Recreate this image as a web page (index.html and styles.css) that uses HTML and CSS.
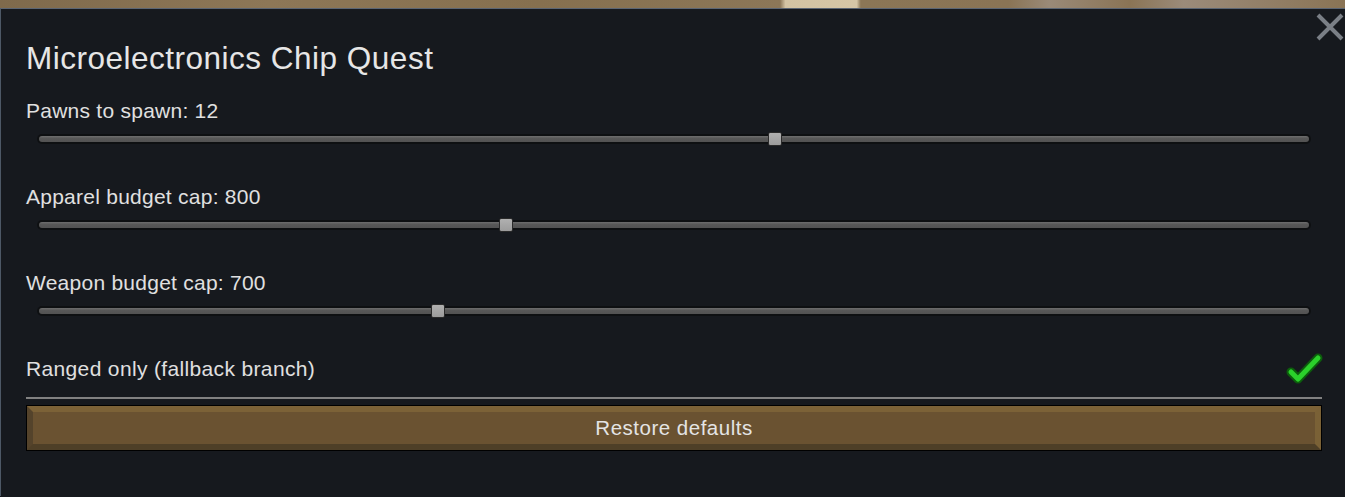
FILE: index.html
```html
<!DOCTYPE html>
<html>
<head>
<meta charset="utf-8">
<link rel="stylesheet" href="styles.css">
</head>
<body>
<div class="world"></div>
<div class="panel">
  <button class="close" aria-label="Close">
    <svg width="28" height="28" viewBox="0 0 28 28"><path d="M2 2 L26 26 M26 2 L2 26" stroke="#7a7f86" stroke-width="4" fill="none"/></svg>
  </button>
  <h1 class="title">Microelectronics Chip Quest</h1>
  <div class="settings">
    <div class="setting">
      <div class="label">Pawns to spawn: 12</div>
      <div class="slider"><div class="track"><div class="fill"></div><div class="thumb" style="left: calc(57.9% - 7px)"></div></div></div>
    </div>
    <div class="setting">
      <div class="label">Apparel budget cap: 800</div>
      <div class="slider"><div class="track"><div class="fill"></div><div class="thumb" style="left: calc(36.8% - 7px)"></div></div></div>
    </div>
    <div class="setting">
      <div class="label">Weapon budget cap: 700</div>
      <div class="slider"><div class="track"><div class="fill"></div><div class="thumb" style="left: calc(31.5% - 7px)"></div></div></div>
    </div>
  </div>
  <div class="check-row">
    <span class="label">Ranged only (fallback branch)</span>
    <svg class="check" width="38" height="34" viewBox="0 0 38 34">
      <polyline points="5,20 12,27 32,6" fill="none" stroke="#0c5e0c" stroke-width="9" stroke-linecap="round" stroke-linejoin="round"/>
      <polyline points="5,20 12,27 32,6" fill="none" stroke="#2bd12b" stroke-width="5" stroke-linecap="round" stroke-linejoin="round"/>
    </svg>
  </div>
  <div class="separator"></div>
  <button class="restore"><span class="bevel">Restore defaults</span></button>
</div>
</body>
</html>
```
FILE: styles.css
```css
html, body {
  margin: 0;
  padding: 0;
  background: #16191e;
  font-family: "Liberation Sans", Arial, sans-serif;
}
.world {
  height: 8px;
  background: linear-gradient(90deg, #7f6a4c 0%, #8d7757 20%, #86704f 40%, #8c7758 58%, #d3c3a3 58.4%, #d6c6a6 63.7%, #8b7656 64%, #8a7455 75%, #9a8a78 78%, #8a7455 84%, #9b8b7a 88%, #8a7455 100%);
}
.panel {
  position: relative;
  height: 488px;
  box-sizing: border-box;
  border-top: 1px solid #5b6573;
  border-left: 1px solid #4d5866;
  background: #16191e;
  padding: 32px 23px 0 25px;
  color: #e2e2e2;
}
.close {
  position: absolute;
  top: 4px;
  right: 1px;
  padding: 0;
  border: 0;
  background: none;
  width: 28px;
  height: 28px;
}
.close svg { display: block; }
.title {
  margin: 0;
  font-size: 31.5px;
  font-weight: normal;
  letter-spacing: 0.5px;
  line-height: 34px;
  color: #e6e6e6;
}
.settings {
  display: flex;
  flex-direction: column;
  gap: 39px;
  margin-top: 24px;
}
.setting {
  display: flex;
  flex-direction: column;
  gap: 9px;
}
.label {
  font-size: 21px;
  line-height: 24px;
  letter-spacing: 0.25px;
  color: #e0e0e0;
}
.check-row .label {
  letter-spacing: 0.35px;
}
.slider {
  height: 14px;
  padding: 0 11px;
  display: flex;
  align-items: center;
}
.track {
  position: relative;
  flex: 1;
  height: 10px;
  border-radius: 5px;
  background: #0e1012;
  box-sizing: border-box;
  padding: 2px;
}
.fill {
  height: 6px;
  border-radius: 3px;
  background: linear-gradient(#6e6e6e, #585858 40%, #525252);
}
.thumb {
  position: absolute;
  top: -2px;
  width: 14px;
  height: 14px;
  box-sizing: border-box;
  border: 1px solid #2a2a2a;
  border-radius: 2px;
  background: linear-gradient(#b0b0b0, #9c9c9c);
}
.check-row {
  margin-top: 36px;
  height: 30px;
  display: flex;
  align-items: center;
  justify-content: space-between;
  margin-right: -2px;
}
.check { display: block; }
.separator {
  margin-top: 13px;
  height: 2px;
  background: #818181;
}
.restore {
  display: flex;
  width: 100%;
  margin-top: 6px;
  height: 46px;
  padding: 0;
  border: 1px solid #000;
  background: #000;
  font-family: inherit;
}
.bevel {
  flex: 1;
  display: flex;
  align-items: center;
  justify-content: center;
  box-sizing: border-box;
  border-style: solid;
  border-width: 6px;
  border-color: #7c6237 #7a6136 #4e3f27 #54432b;
  background: #6a5231;
  color: #e4e4e4;
  font-size: 20.5px;
  letter-spacing: 0.5px;
}
```
